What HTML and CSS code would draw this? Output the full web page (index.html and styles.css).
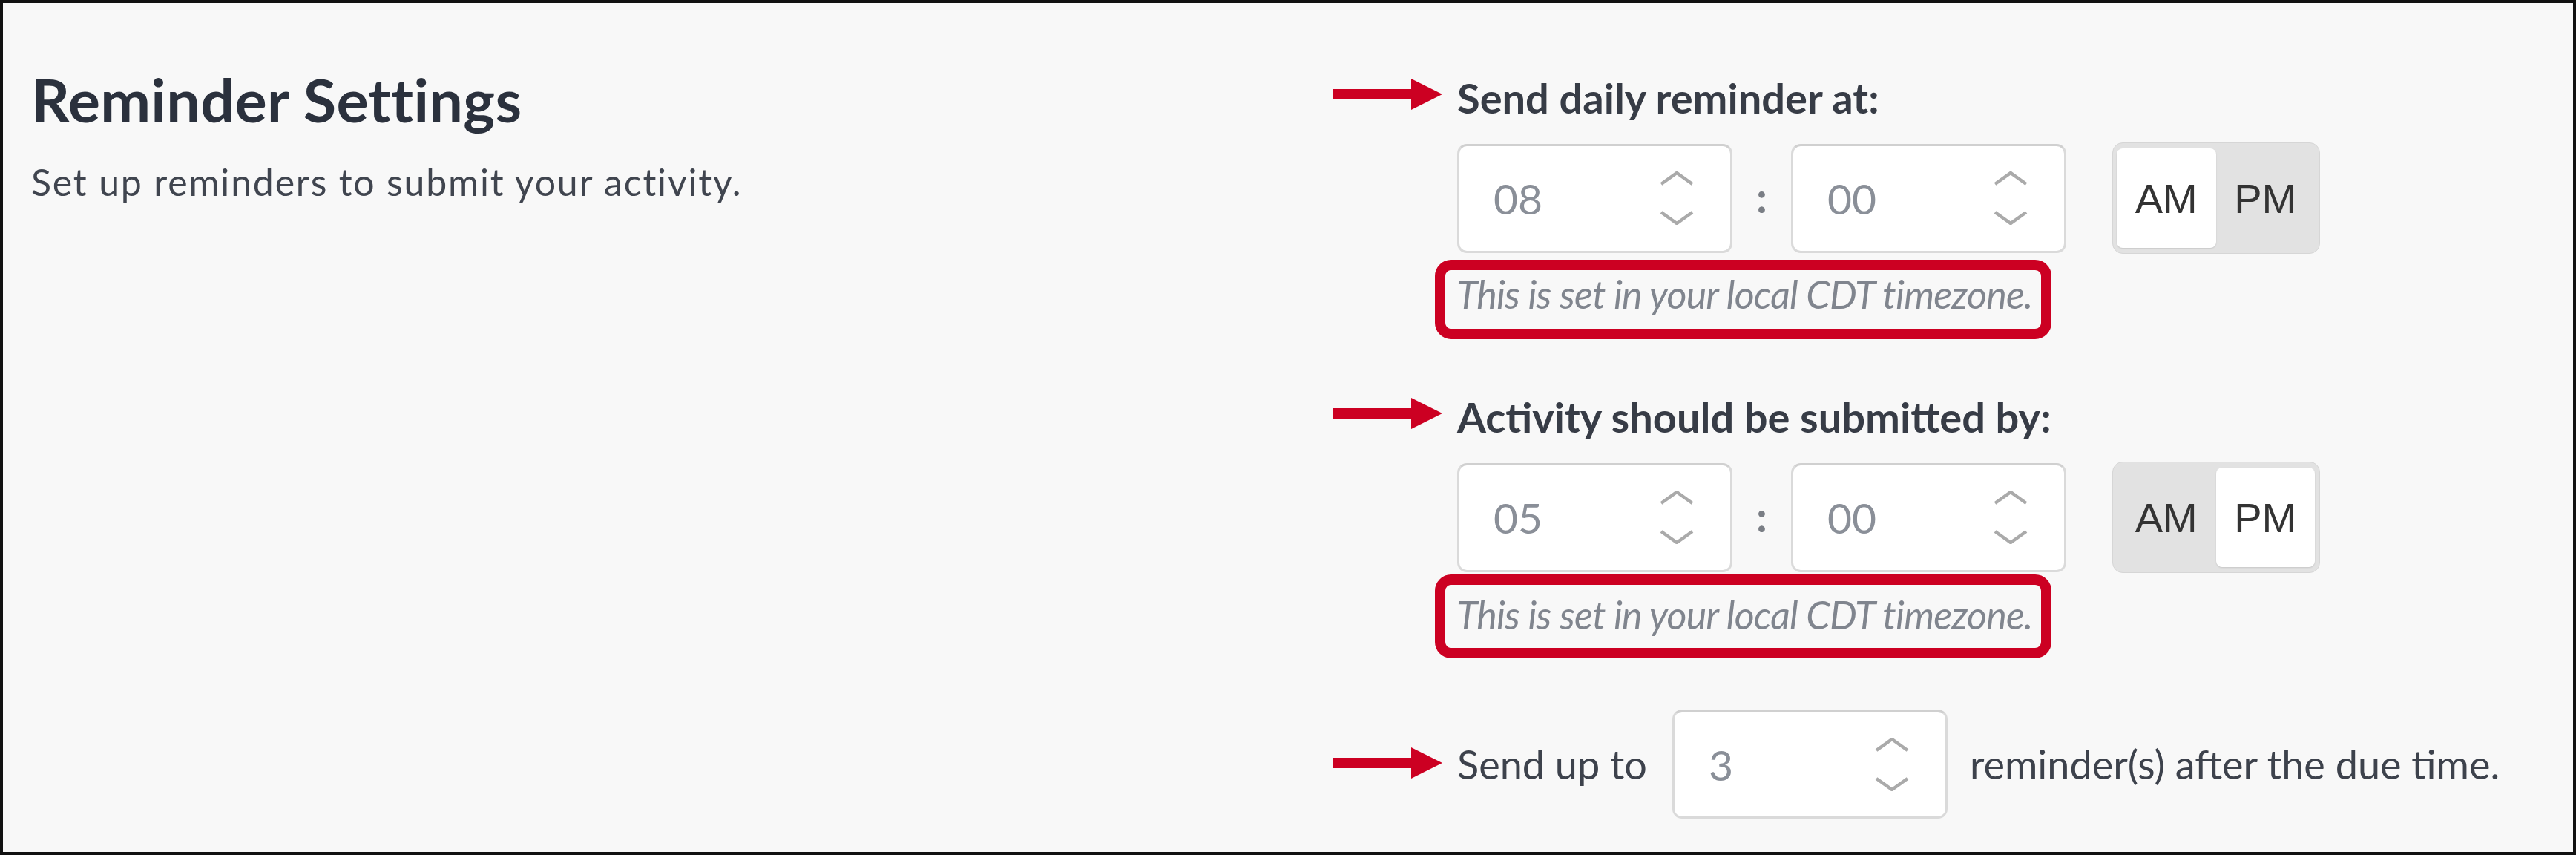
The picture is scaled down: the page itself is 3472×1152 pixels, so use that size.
FILE: index.html
```html
<!DOCTYPE html>
<html>
<head>
    <title>Reminder Settings</title>
    <link rel="stylesheet" href="styles.css">
</head>
<body>
    <div class="frame">
        <div class="intro">
            <h2 class="title">Reminder Settings</h2>
            <p class="subtitle">Set up reminders to submit your activity.</p>
        </div>

        <div class="settings">
            <!-- daily reminder -->
            <div class="field-label">
                <svg class="arrow" viewBox="0 0 148 42"><rect x="0" y="14" width="108" height="14"/><polygon points="106,0 148,21 106,42"/></svg>
                Send daily reminder at:
            </div>
            <div class="time-row">
                <div class="spin">
                    <span class="spin-value">08</span>
                    <svg class="chevrons" viewBox="0 0 46 72"><polyline points="2,17 23,2 44,17"/><polyline points="2,55 23,70 44,55"/></svg>
                </div>
                <span class="colon">:</span>
                <div class="spin">
                    <span class="spin-value">00</span>
                    <svg class="chevrons" viewBox="0 0 46 72"><polyline points="2,17 23,2 44,17"/><polyline points="2,55 23,70 44,55"/></svg>
                </div>
                <div class="ampm">
                    <span class="seg active">AM</span>
                    <span class="seg">PM</span>
                </div>
            </div>
            <div class="note">This is set in your local CDT timezone.</div>

            <!-- due time -->
            <div class="field-label second">
                <svg class="arrow" viewBox="0 0 148 42"><rect x="0" y="14" width="108" height="14"/><polygon points="106,0 148,21 106,42"/></svg>
                Activity should be submitted by:
            </div>
            <div class="time-row">
                <div class="spin">
                    <span class="spin-value">05</span>
                    <svg class="chevrons" viewBox="0 0 46 72"><polyline points="2,17 23,2 44,17"/><polyline points="2,55 23,70 44,55"/></svg>
                </div>
                <span class="colon">:</span>
                <div class="spin">
                    <span class="spin-value">00</span>
                    <svg class="chevrons" viewBox="0 0 46 72"><polyline points="2,17 23,2 44,17"/><polyline points="2,55 23,70 44,55"/></svg>
                </div>
                <div class="ampm">
                    <span class="seg">AM</span>
                    <span class="seg active">PM</span>
                </div>
            </div>
            <div class="note note-low">This is set in your local CDT timezone.</div>

            <!-- follow ups -->
            <div class="count-row">
                <svg class="arrow" viewBox="0 0 148 42"><rect x="0" y="14" width="108" height="14"/><polygon points="106,0 148,21 106,42"/></svg>
                <span>Send up to</span>
                <div class="spin">
                    <span class="spin-value">3</span>
                    <svg class="chevrons" viewBox="0 0 46 72"><polyline points="2,17 23,2 44,17"/><polyline points="2,55 23,70 44,55"/></svg>
                </div>
                <span>reminder(s) after the due time.</span>
            </div>
        </div>
    </div>
</body>
</html>
```

FILE: styles.css
```css
body {
    margin: 0;
    font-family: 'Lato', 'Noto Sans', sans-serif;
}

.frame {
    width: 3472px;
    height: 1152px;
    box-sizing: border-box;
    border: 4px solid #111;
    background: #f8f8f8;
    display: grid;
    grid-template-columns: 1960px 1fr;
}

.intro {
    padding: 81px 0 0 38px;
}

.title {
    margin: 0;
    font-size: 81px;
    line-height: 1.2;
    font-weight: 700;
    letter-spacing: 0.3px;
    color: #2b313d;
}

.subtitle {
    margin: 33px 0 0;
    font-size: 50px;
    line-height: 1.2;
    letter-spacing: 1.8px;
    color: #40454f;
}

.settings {
    padding-top: 94px;
}

.field-label {
    position: relative;
    font-size: 56px;
    line-height: 1.2;
    font-weight: 700;
    color: #373c46;
}

.field-label.second {
    margin-top: 71px;
}

.arrow {
    position: absolute;
    left: -168px;
    top: 8px;
    width: 148px;
    height: 42px;
    fill: #cc0022;
}

.time-row {
    display: flex;
    align-items: center;
    margin-top: 27px;
}

.spin {
    width: 371px;
    height: 147px;
    box-sizing: border-box;
    display: flex;
    align-items: center;
    justify-content: space-between;
    padding: 0 49px 0 46px;
    background: #fff;
    border: 3px solid #dadada;
    border-top-color: #d0d0d0;
    border-radius: 13px;
}

.spin-value {
    font-size: 57px;
    color: #8a8f98;
}

.chevrons {
    width: 46px;
    height: 72px;
    fill: none;
    stroke: #aaaaaa;
    stroke-width: 4.5;
}

.colon {
    width: 79px;
    text-align: center;
    font-size: 58px;
    font-weight: 700;
    color: #7a7e85;
    margin-top: -6px;
}

.ampm {
    display: flex;
    margin-left: 62px;
    width: 280px;
    height: 150px;
    box-sizing: border-box;
    padding: 7px 6px 7px 5px;
    background: #e2e2e2;
    border: 1px solid #d6d6d6;
    border-radius: 14px;
}

.seg {
    flex: 1;
    display: flex;
    align-items: center;
    justify-content: center;
    font-family: 'Liberation Sans', Arial, sans-serif;
    font-size: 56px;
    color: #333;
    border-radius: 8px;
}

.seg.active {
    background: #fff;
    box-shadow: 0 1px 2px rgba(0, 0, 0, 0.12);
}

.note {
    width: 831px;
    height: 107px;
    box-sizing: border-box;
    margin: 8px 0 0 -30px;
    padding: 1px 15px 0;
    border: 14px solid #cc0022;
    border-radius: 22px;
    font-size: 52px;
    line-height: 1.2;
    font-style: italic;
    letter-spacing: -0.8px;
    color: #80858e;
    white-space: nowrap;
}

.note.note-low {
    margin-top: 2px;
    height: 113px;
    padding-top: 9px;
}

.count-row {
    position: relative;
    display: flex;
    align-items: center;
    margin-top: 69px;
    font-size: 54px;
    color: #3d424c;
}

.count-row .arrow {
    top: 50%;
    margin-top: -23px;
}

.count-row .spin {
    margin: 0 30px 0 34px;
}
```
